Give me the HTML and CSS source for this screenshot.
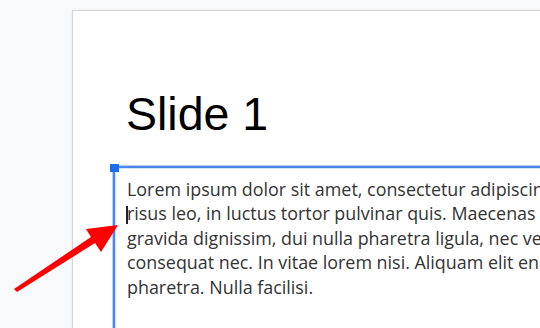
FILE: index.html
```html
<!DOCTYPE html>
<html lang="en">
<head>
    <meta charset="UTF-8">
    <title>Slide 1</title>
    <link rel="stylesheet" href="styles.css">
</head>
<body>
    <div class="slide">
        <h1 class="slide-title">Slide 1</h1>
        <div class="text-box">
            <span class="handle"></span>
            <p class="body-text">
                <span class="line">Lorem ipsum dolor sit amet, consectetur adipiscing elit. Sed</span>
                <span class="line"><span class="caret"></span>risus leo, in luctus tortor pulvinar quis. Maecenas vel</span>
                <span class="line">gravida dignissim, dui nulla pharetra ligula, nec vehicula</span>
                <span class="line">consequat nec. In vitae lorem nisi. Aliquam elit enim,</span>
                <span class="line">pharetra. Nulla facilisi.</span>
            </p>
        </div>
    </div>

    <svg class="arrow" width="140" height="110" viewBox="0 200 140 110">
        <polygon points="14,289 91,237 86,229 118,225 101,252 95,243 17,292" fill="#f00" />
    </svg>
</body>
</html>
```

FILE: styles.css
```css
* {
    margin: 0;
    padding: 0;
    box-sizing: border-box;
}

body {
    background-color: #f8f9fa;
    overflow: hidden;
    width: 540px;
    height: 328px;
    position: relative;
}

.slide {
    margin: 10px 0 0 72px;
    width: 620px;
    height: 420px;
    background-color: white;
    border: 1px solid #d4d4d4;
    box-shadow: 0 0 3px rgba(0, 0, 0, 0.06);
    padding: 80px 0 0 40px;
}

.slide-title {
    font-family: 'Liberation Sans', Arial, sans-serif;
    font-weight: normal;
    font-size: 46.5px;
    line-height: 1;
    color: #000;
    margin-left: 13px;
    margin-bottom: 28px;
}

.text-box {
    position: relative;
    border-top: 2px solid #4a86f0;
    border-left: 2px solid #4a86f0;
    box-shadow: -1px -1px 0 #bcd2fa, inset 1px 1px 0 #d6e4fc;
    height: 300px;
    padding: 9px 0 0 12px;
}

.handle {
    position: absolute;
    left: -5px;
    top: -4px;
    width: 9px;
    height: 8px;
    background-color: #1a6ef0;
}

.body-text {
    font-family: 'Open Sans', sans-serif;
    font-size: 17.9px;
    line-height: 24.5px;
    color: #333;
    white-space: nowrap;
}

.line {
    display: block;
}

.caret {
    display: inline-block;
    width: 2px;
    height: 18px;
    margin-left: -1px;
    margin-right: -1px;
    vertical-align: -4px;
    background-color: #222;
}

.arrow {
    position: absolute;
    left: 0;
    top: 200px;
}
```
